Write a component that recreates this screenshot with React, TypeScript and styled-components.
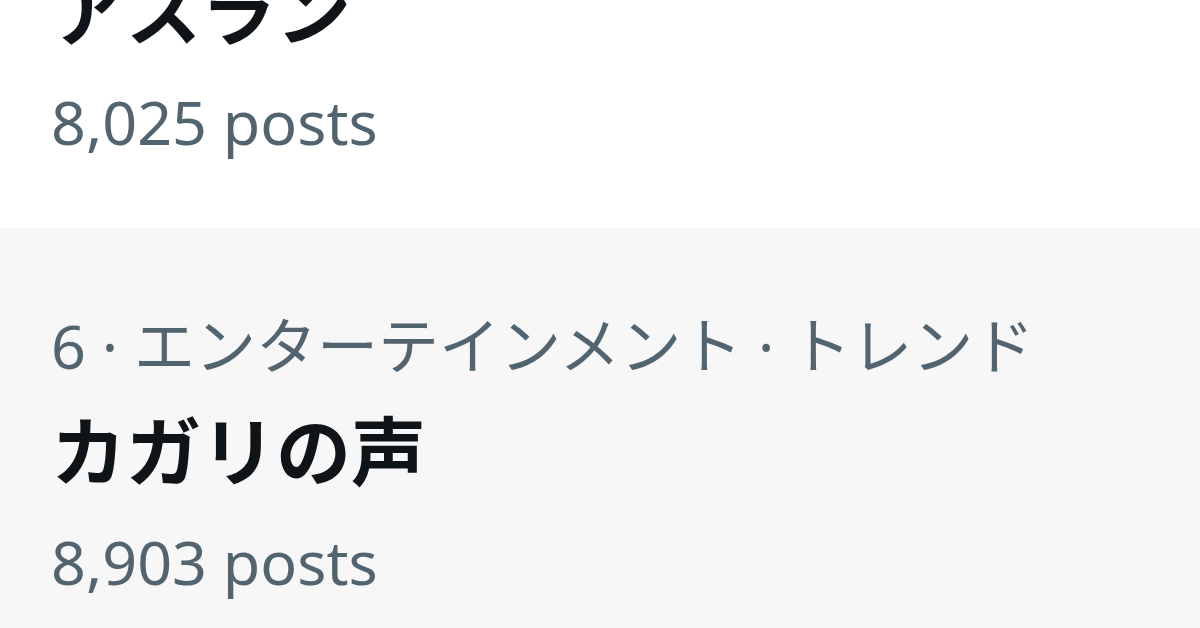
import React from "react";
import styled, { createGlobalStyle } from "styled-components";

const GlobalStyle = createGlobalStyle`
  html, body {
    margin: 0;
    padding: 0;
    background: #ffffff;
    overflow: hidden;
  }
  body {
    font-family: "Noto Sans", "Noto Sans CJK JP", sans-serif;
  }
`;

const Page = styled.div`
  width: 1200px;
  height: 628px;
  overflow: hidden;
`;

// the list is scrolled so that the first trend is partly cut off
const TrendList = styled.div`
  display: flex;
  flex-direction: column;
  margin-top: -212px;
`;

type ItemProps = {
  hovered?: boolean;
};

const TrendItem = styled.div<ItemProps>`
  display: flex;
  flex-direction: column;
  height: 440px;
  box-sizing: border-box;
  padding: 68px 50px 0 51px;
  background: ${({ hovered }) => (hovered ? "#f7f7f7" : "#ffffff")};
`;

const Meta = styled.div`
  color: #536471;
  font-size: 61px;
  line-height: 100px;
  white-space: nowrap;
`;

const Title = styled.div`
  color: #0f1419;
  font-size: 75px;
  font-weight: 700;
  line-height: 110px;
  white-space: nowrap;
`;

const Posts = styled(Meta)`
  margin-top: 6px;
`;

type Trend = {
  rank: number;
  category: string;
  name: string;
  posts: string;
};

const trends: Trend[] = [
  { rank: 5, category: "エンターテインメント · トレンド", name: "アスラン", posts: "8,025 posts" },
  { rank: 6, category: "エンターテインメント · トレンド", name: "カガリの声", posts: "8,903 posts" },
];

export default function App() {
  return (
    <Page>
      <GlobalStyle />
      <TrendList>
        {trends.map((t, i) => (
          <TrendItem key={t.rank} hovered={i === 1}>
            <Meta>
              {t.rank} · {t.category}
            </Meta>
            <Title>{t.name}</Title>
            <Posts>{t.posts}</Posts>
          </TrendItem>
        ))}
      </TrendList>
    </Page>
  );
}
